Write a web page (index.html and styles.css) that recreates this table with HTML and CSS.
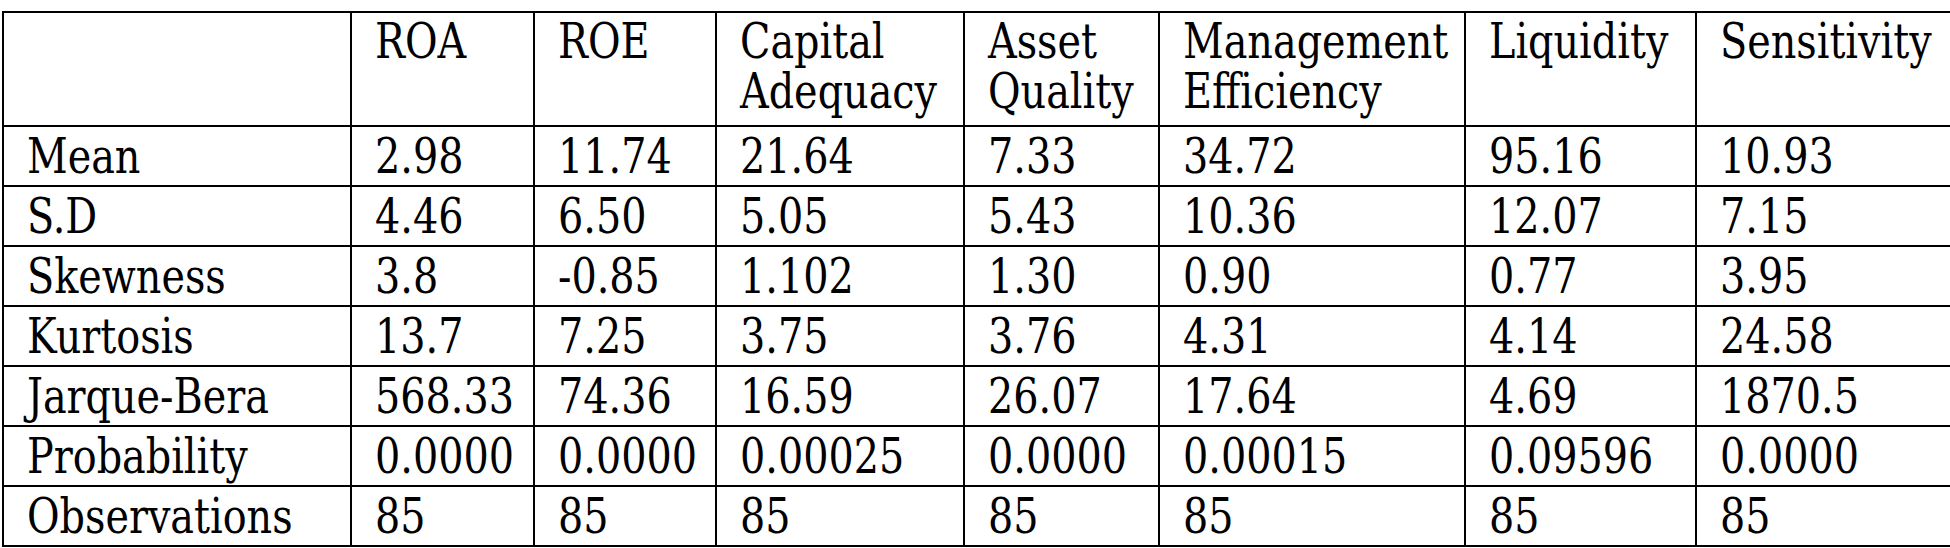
FILE: index.html
```html
<!DOCTYPE html>
<html>
<head>
<meta charset="utf-8">
<link rel="stylesheet" href="styles.css">
</head>
<body>
<table class="stats">
  <colgroup>
    <col class="c-label">
    <col class="c-roa">
    <col class="c-roe">
    <col class="c-cap">
    <col class="c-asset">
    <col class="c-mgmt">
    <col class="c-liq">
    <col class="c-sens">
  </colgroup>
  <thead>
    <tr class="head">
      <th></th>
      <th><span class="t">ROA</span></th>
      <th><span class="t">ROE</span></th>
      <th><span class="t">Capital<br>Adequacy</span></th>
      <th><span class="t">Asset<br>Quality</span></th>
      <th><span class="t">Management<br>Efficiency</span></th>
      <th><span class="t">Liquidity</span></th>
      <th><span class="t">Sensitivity</span></th>
    </tr>
  </thead>
  <tbody>
    <tr><td><span class="t">Mean</span></td><td><span class="t">2.98</span></td><td><span class="t">11.74</span></td><td><span class="t">21.64</span></td><td><span class="t">7.33</span></td><td><span class="t">34.72</span></td><td><span class="t">95.16</span></td><td><span class="t">10.93</span></td></tr>
    <tr><td><span class="t">S.D</span></td><td><span class="t">4.46</span></td><td><span class="t">6.50</span></td><td><span class="t">5.05</span></td><td><span class="t">5.43</span></td><td><span class="t">10.36</span></td><td><span class="t">12.07</span></td><td><span class="t">7.15</span></td></tr>
    <tr><td><span class="t">Skewness</span></td><td><span class="t">3.8</span></td><td><span class="t">-0.85</span></td><td><span class="t">1.102</span></td><td><span class="t">1.30</span></td><td><span class="t">0.90</span></td><td><span class="t">0.77</span></td><td><span class="t">3.95</span></td></tr>
    <tr><td><span class="t">Kurtosis</span></td><td><span class="t">13.7</span></td><td><span class="t">7.25</span></td><td><span class="t">3.75</span></td><td><span class="t">3.76</span></td><td><span class="t">4.31</span></td><td><span class="t">4.14</span></td><td><span class="t">24.58</span></td></tr>
    <tr><td><span class="t">Jarque-Bera</span></td><td><span class="t">568.33</span></td><td><span class="t">74.36</span></td><td><span class="t">16.59</span></td><td><span class="t">26.07</span></td><td><span class="t">17.64</span></td><td><span class="t">4.69</span></td><td><span class="t">1870.5</span></td></tr>
    <tr><td><span class="t">Probability</span></td><td><span class="t">0.0000</span></td><td><span class="t">0.0000</span></td><td><span class="t">0.00025</span></td><td><span class="t">0.0000</span></td><td><span class="t">0.00015</span></td><td><span class="t">0.09596</span></td><td><span class="t">0.0000</span></td></tr>
    <tr><td><span class="t">Observations</span></td><td><span class="t">85</span></td><td><span class="t">85</span></td><td><span class="t">85</span></td><td><span class="t">85</span></td><td><span class="t">85</span></td><td><span class="t">85</span></td><td><span class="t">85</span></td></tr>
  </tbody>
</table>
</body>
</html>
```
FILE: styles.css
```css
html, body {
  margin: 0;
  padding: 0;
  background: #ffffff;
  overflow: hidden;
}

.stats {
  margin: 11px 0 0 2px;
  border-collapse: collapse;
  table-layout: fixed;
  width: 2000px;
  font-family: "DejaVu Serif Condensed", "DejaVu Serif", serif;
  font-stretch: condensed;
  font-size: 48px;
  color: #000000;
}

.c-label { width: 348px; }
.c-roa { width: 183px; }
.c-roe { width: 182px; }
.c-cap { width: 248px; }
.c-asset { width: 195px; }
.c-mgmt { width: 306px; }
.c-liq { width: 231px; }
.c-sens { width: 307px; }

.stats th,
.stats td {
  border: 2px solid #000000;
  padding: 0 0 0 23px;
  text-align: left;
  white-space: nowrap;
  overflow: hidden;
}

.stats th {
  font-weight: normal;
  vertical-align: top;
  line-height: 50px;
  height: 114px;
  padding-top: 3px;
  box-sizing: border-box;
}

.stats td {
  line-height: 58px;
  height: 58px;
  vertical-align: top;
}

.t {
  display: inline-block;
  transform: scaleX(0.92);
  transform-origin: left center;
}
```
